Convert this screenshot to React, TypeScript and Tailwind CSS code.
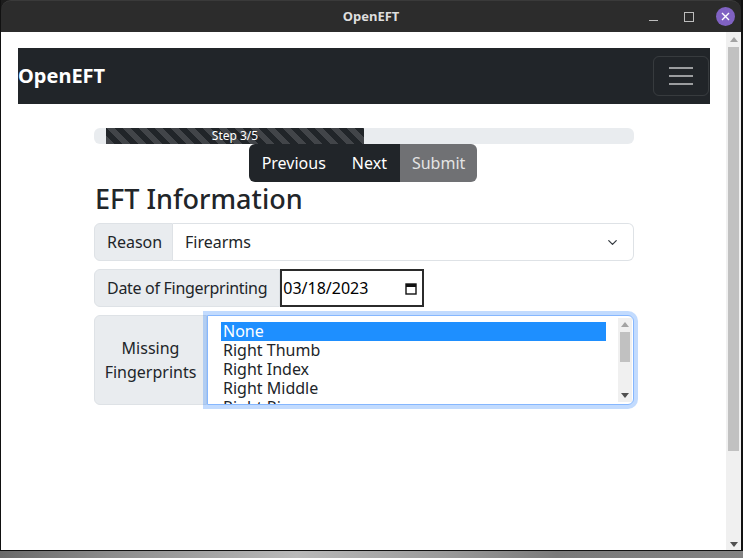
import { ChevronDown } from 'lucide-react';

const options = ['None', 'Right Thumb', 'Right Index', 'Right Middle', 'Right Ring', 'Right Little'];

const Arrow = ({ up, className }: { up?: boolean; className?: string }) => (
  <svg width="8" height="5" viewBox="0 0 8 5" className={className}>
    {up ? <path d="M0 5 L4 0 L8 5 Z" fill="currentColor" /> : <path d="M0 0 L8 0 L4 5 Z" fill="currentColor" />}
  </svg>
);

const TitleBar = () => (
  <div className="h-[32px] shrink-0 bg-[#2c2c2c] rounded-t-[10px] border-t border-[#3a3a3a] grid grid-cols-[1fr_auto_1fr] items-center">
    <div />
    <div className="text-[13px] font-bold text-[#dedede] pt-[1px]">OpenEFT</div>
    <div className="flex items-center justify-end gap-[14px] pr-[6px]">
      <div className="w-[9px] h-px bg-[#bdbdbd] mt-[7px]" />
      <div className="w-[10px] h-[10px] border border-[#bdbdbd] ml-[12px]" />
      <div className="w-[19px] h-[19px] rounded-full bg-[#8062c3] flex items-center justify-center ml-[8px]">
        <svg width="9" height="9" viewBox="0 0 9 9">
          <path d="M1 1 L8 8 M8 1 L1 8" stroke="#fff" strokeWidth="1.4" />
        </svg>
      </div>
    </div>
  </div>
);

const Navbar = () => (
  <nav className="h-[56px] bg-[#212529] flex items-center justify-between">
    <span className="text-[20px] font-bold text-white leading-none">OpenEFT</span>
    <button className="w-[56px] h-[40px] mr-px rounded-[6px] border border-white/10 flex flex-col items-center justify-center gap-[6px]">
      <span className="block w-[24px] h-[2px] bg-white/55" />
      <span className="block w-[24px] h-[2px] bg-white/55" />
      <span className="block w-[24px] h-[2px] bg-white/55" />
    </button>
  </nav>
);

const Label = ({ children, className }: { children: React.ReactNode; className?: string }) => (
  <div
    className={`bg-[#e9ecef] border border-[#dee2e6] rounded-l-[6px] px-[12px] flex items-center text-[#212529] ${className ?? ''}`}
  >
    {children}
  </div>
);

export default function App() {
  return (
    <div className="w-[743px] h-[558px] bg-[#1c1c1c] flex flex-col overflow-hidden font-['Noto_Sans',sans-serif]">
      <div className="h-[551px] shrink-0 flex flex-col border-l border-r-2 border-b border-[#111]">
        <TitleBar />
        <div className="flex-1 flex min-h-0">
          {/* page */}
          <div className="flex-1 bg-white pt-[16px] pl-[17px] pr-[16px] text-[16px]">
            <Navbar />

            <div className="w-[540px] mx-auto mt-[24px]">
              <div className="h-[16px] rounded-[6px] bg-[#e9ecef] flex overflow-hidden">
                <div className="w-[12px]" />
                <div className="w-[258px] bg-[#212529] bg-[linear-gradient(45deg,rgba(255,255,255,.15)_25%,transparent_25%,transparent_50%,rgba(255,255,255,.15)_50%,rgba(255,255,255,.15)_75%,transparent_75%,transparent)] bg-[length:16px_16px] flex items-center justify-center text-[12px] leading-none text-white">
                  Step 3/5
                </div>
              </div>

              <div className="flex justify-center">
                <div className="flex h-[38px] rounded-[6px] overflow-hidden text-[16px] ml-[-2px]">
                  <button className="bg-[#212529] text-white px-[13px]">Previous</button>
                  <button className="bg-[#212529] text-white px-[13px]">Next</button>
                  <button className="bg-[#707174] text-[#e4e4e4] px-[12px]">Submit</button>
                </div>
              </div>

              <h2 className="text-[27px] font-medium leading-[33px] text-[#212529] mb-[8px] ml-px">EFT Information</h2>

              <div className="flex h-[38px] mb-[8px]">
                <Label className="w-[79px]">Reason</Label>
                <div className="flex-1 border border-l-0 border-[#dee2e6] rounded-r-[6px] flex items-center justify-between pl-[12px] pr-[13px] text-[#212529]">
                  <span>Firearms</span>
                  <ChevronDown size={15} strokeWidth={2} className="text-[#343a40]" />
                </div>
              </div>

              <div className="flex h-[38px] mb-[8px]">
                <Label className="tracking-[-0.3px]">Date of Fingerprinting</Label>
                <div className="w-[144px] border-2 border-[#2b2b2b] flex items-center justify-between pl-[1px] pr-[5px] text-black">
                  <span>03/18/2023</span>
                  <svg width="12" height="13" viewBox="0 0 12 13">
                    <rect x="1" y="2" width="10" height="10" fill="none" stroke="#111" strokeWidth="1.4" />
                    <rect x="1" y="2" width="10" height="3" fill="#111" />
                  </svg>
                </div>
              </div>

              <div className="flex h-[90px]">
                <Label className="w-[113px] justify-center text-center leading-[24px]">
                  <span>
                    Missing
                    <br />
                    Fingerprints
                  </span>
                </Label>
                <div className="flex-1 flex border border-[#86b7fe] rounded-r-[6px] shadow-[0_0_0_4px_rgba(13,110,253,0.25)] bg-white overflow-hidden">
                  <div className="flex-1 pl-[13px] pr-[12px] pt-[6px] overflow-hidden text-[#212529] leading-[19px]">
                    {options.map((o, i) => (
                      <div key={o} className={`px-[2px] ${i === 0 ? 'bg-[#1e8fff] text-white' : ''}`}>
                        {o}
                      </div>
                    ))}
                  </div>
                  <div className="w-[14px] my-[2px] mr-[1px] bg-[#f0f0f0] flex flex-col items-center">
                    <Arrow up className="text-[#a3a3a3] mt-[4px]" />
                    <div className="w-[10px] h-[30px] bg-[#c1c1c1] mt-[5px]" />
                    <div className="flex-1" />
                    <Arrow className="text-[#505050] mb-[4px]" />
                  </div>
                </div>
              </div>
            </div>
          </div>

          {/* page scrollbar */}
          <div className="w-[15px] bg-[#f0f0f0] flex flex-col items-center">
            <Arrow up className="text-[#a3a3a3] mt-[5px]" />
            <div className="w-[11px] h-[404px] bg-[#c1c1c1] mt-[5px]" />
            <div className="flex-1" />
            <Arrow className="text-[#505050] mb-[3px]" />
          </div>
        </div>
      </div>
      <div className="flex-1 bg-[linear-gradient(90deg,#6a6a6a_0%,#8c8c8c_15%,#b9b9b9_40%,#9a9a9a_60%,#7a7a7a_75%,#828282_100%)]" />
    </div>
  );
}
